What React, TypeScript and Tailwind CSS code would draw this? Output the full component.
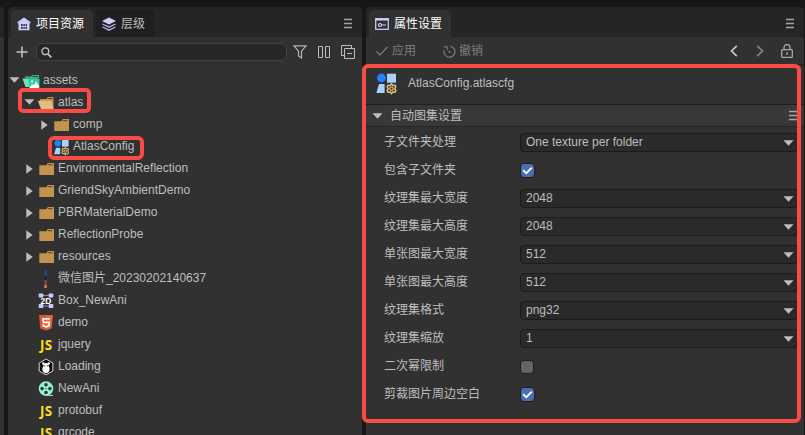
import type { ReactNode } from "react";

type IconKind =
  | "assets"
  | "folderOpen"
  | "folder"
  | "atlas"
  | "image"
  | "box2d"
  | "html"
  | "js"
  | "scene"
  | "reel";

type Node = { name: string; depth: number; icon: IconKind; arrow?: "open" | "closed" };

const tree: Node[] = [
  { name: "assets", depth: 0, icon: "assets", arrow: "open" },
  { name: "atlas", depth: 1, icon: "folderOpen", arrow: "open" },
  { name: "comp", depth: 2, icon: "folder", arrow: "closed" },
  { name: "AtlasConfig", depth: 2, icon: "atlas" },
  { name: "EnvironmentalReflection", depth: 1, icon: "folder", arrow: "closed" },
  { name: "GriendSkyAmbientDemo", depth: 1, icon: "folder", arrow: "closed" },
  { name: "PBRMaterialDemo", depth: 1, icon: "folder", arrow: "closed" },
  { name: "ReflectionProbe", depth: 1, icon: "folder", arrow: "closed" },
  { name: "resources", depth: 1, icon: "folder", arrow: "closed" },
  { name: "微信图片_20230202140637", depth: 1, icon: "image" },
  { name: "Box_NewAni", depth: 1, icon: "box2d" },
  { name: "demo", depth: 1, icon: "html" },
  { name: "jquery", depth: 1, icon: "js" },
  { name: "Loading", depth: 1, icon: "scene" },
  { name: "NewAni", depth: 1, icon: "reel" },
  { name: "protobuf", depth: 1, icon: "js" },
  { name: "qrcode", depth: 1, icon: "js" },
];

type Field = { label: string; value?: string; checked?: boolean };

const fields: Field[] = [
  { label: "子文件夹处理", value: "One texture per folder" },
  { label: "包含子文件夹", checked: true },
  { label: "纹理集最大宽度", value: "2048" },
  { label: "纹理集最大高度", value: "2048" },
  { label: "单张图最大宽度", value: "512" },
  { label: "单张图最大高度", value: "512" },
  { label: "纹理集格式", value: "png32" },
  { label: "纹理集缩放", value: "1" },
  { label: "二次幂限制", checked: false },
  { label: "剪裁图片周边空白", checked: true },
];

function AtlasShape() {
  return (
    <>
      <circle cx="5.4" cy="5" r="4.4" fill="#1f85ff" />
      <rect x="11" y="0.7" width="9" height="9" fill="#abd0fc" />
      <path d="M3 11H8.6V20H0.4Z" fill="#abd0fc" />
      <g stroke="#e3c27a" fill="none">
        <path
          d="M15.5 10.8l1.3 1.7 2.2-.3.9 1.6-1.1 1.9 1.1 1.9-.9 1.6-2.2-.2-1.3 1.7-1.3-1.7-2.2.2-.9-1.6 1.1-1.9-1.1-1.9.9-1.6 2.2.3z"
          fill="#38342c"
          strokeWidth="1.4"
        />
        <circle cx="15.5" cy="15.7" r="1.7" strokeWidth="1.2" />
      </g>
    </>
  );
}

function iconShape(kind: IconKind): ReactNode {
  switch (kind) {
    case "assets":
      return (
        <>
          <path d="M3 9V7.500H9L10.500 6H17V9Z" fill="#3fae90" />
          <path d="M10.500 7.500H16" stroke="#2b4b42" />
          <path d="M0.500 9.500H15V18H3.500Z" fill="#7cdcc0" />
          <path d="M6 9.500H17.500V19H7.500Z" fill="#2fd0a0" />
          <path d="M7.500 19L10 15L11.500 16.500L14 12.500L17 17V19Z" fill="#fff" />
          <circle cx="10" cy="12.500" r="1" fill="#fff" />
        </>
      );
    case "folderOpen":
      return (
        <>
          <path d="M3 9.500V8H9.500L11 6H16.500V18H5Z" fill="#c29450" />
          <path d="M11 7.500H15.500" stroke="#4d3e28" />
          <path d="M0.800 9.700H14.500L16.500 18H4Z" fill="#e2bc80" />
        </>
      );
    case "folder":
      return (
        <>
          <path d="M2.300 8.300H9.300L10.800 6H17V18H2.300Z" fill="#c29450" />
          <path d="M11 7.700H15.500" stroke="#4d3e28" />
        </>
      );
    case "atlas":
      return (
        <g transform="translate(1.800 4.500) scale(.74)">
          <AtlasShape />
        </g>
      );
    case "image":
      return (
        <>
          <rect x="7.300" y="3" width="2.600" height="6" fill="#1d4d72" />
          <rect x="7.300" y="9" width="2.600" height="4" fill="#202a22" />
          <rect x="7.300" y="13" width="2.600" height="5" fill="#8a4433" />
          <rect x="7.300" y="18" width="2.600" height="3" fill="#b3865c" />
        </>
      );
    case "box2d":
      return (
        <>
          <path d="M4 6.500H14V17H4Z" fill="none" stroke="#8a8aa0" />
          <rect x="3" y="8.500" width="12" height="6.500" fill="#313131" />
          <g fill="#c9caff">
            <rect x="1.700" y="4.500" width="4.600" height="4" rx=".8" />
            <rect x="11.700" y="4.500" width="4.600" height="4" rx=".8" />
            <rect x="1.700" y="15" width="4.600" height="4" rx=".8" />
            <rect x="11.700" y="15" width="4.600" height="4" rx=".8" />
          </g>
          <text x="9" y="14.700" textAnchor="middle" fontSize="8.500" fontWeight="700" fill="#fff">
            2D
          </text>
        </>
      );
    case "html":
      return (
        <>
          <path d="M2 4H16L14.700 17.500L9 19.500L3.300 17.500Z" fill="#e5532d" />
          <path d="M9 5H15L13.800 16.700L9 18.300Z" fill="#f0673a" />
          <path
            d="M12.800 7.900H6L6.400 11.300H12.200L11.800 14.900L9 15.800L6.300 14.900L6.200 13.300"
            fill="none"
            stroke="#fff"
            strokeWidth="1.800"
          />
        </>
      );
    case "js":
      return (
        <text
          x="9.300"
          y="16.800"
          textAnchor="middle"
          fontSize="13.500"
          fontWeight="700"
          letterSpacing=".4"
          fill="#f7df1e"
          className="font-['Open_Sans',sans-serif]"
        >
          JS
        </text>
      );
    case "scene":
      return (
        <>
          <path d="M9 4L15.800 8V16L9 19.800L2.200 16V8Z" fill="#050505" stroke="#d8d8d8" strokeLinejoin="round" />
          <circle cx="6.300" cy="8.600" r="1.300" fill="#fff" />
          <circle cx="11.700" cy="8.600" r="1.300" fill="#fff" />
          <path
            d="M9 8C10.600 8 11.500 9.300 11.500 11C12.600 12 13 14 12.300 15.700C11.800 17.300 10.500 18 9 18C7.500 18 6.200 17.300 5.700 15.700C5 14 5.400 12 6.500 11C6.500 9.300 7.400 8 9 8Z"
            fill="#fff"
          />
          <path d="M7.200 10.800H8.200M9.800 10.800H10.800" stroke="#222" />
        </>
      );
    case "reel":
      return (
        <>
          <circle cx="9" cy="11.600" r="7.300" fill="#93f5cd" />
          <path d="M9 18.400H16" stroke="#93f5cd" />
          <g fill="#2d3632">
            <circle cx="9" cy="7.700" r="1.800" />
            <circle cx="9" cy="15.500" r="1.800" />
            <circle cx="5.100" cy="11.600" r="1.800" />
            <circle cx="12.900" cy="11.600" r="1.800" />
            <circle cx="9" cy="11.600" r=".7" />
          </g>
        </>
      );
  }
}

function MenuIcon() {
  return (
    <svg width="8" height="11" viewBox="0 0 8 11" className="shrink-0">
      <path d="M0 1.500H8M0 5.500H8M0 9.500H8" stroke="#a4a4a4" strokeWidth="1.700" />
    </svg>
  );
}

function DownArrow() {
  return (
    <svg width="11" height="6" viewBox="0 0 11 6" className="shrink-0">
      <path d="M0.500 0.300H10.500L5.500 5.700Z" fill="#bebebe" />
    </svg>
  );
}

function TreeRow({ node }: { node: Node }) {
  return (
    <div className="flex h-[22px] shrink-0 items-center" style={{ paddingLeft: node.depth * 15 }}>
      <div className="flex w-[14px] shrink-0 items-center">
        {node.arrow === "open" && (
          <div className="pl-px">
            <DownArrow />
          </div>
        )}
        {node.arrow === "closed" && (
          <svg width="7" height="10" viewBox="0 0 7 10" className="mt-0.5 ml-[3px]">
            <path d="M0.300 0.200V9.800L6.700 5Z" fill="#bebebe" />
          </svg>
        )}
      </div>
      <svg width="18" height="22" viewBox="0 0 18 22" className="shrink-0">
        {iconShape(node.icon)}
      </svg>
      <span className="pl-[3px] leading-[22px] whitespace-nowrap">{node.name}</span>
    </div>
  );
}

function ProjectPanel() {
  return (
    <section className="flex w-[354px] shrink-0 flex-col overflow-hidden rounded-t-[5px] bg-[#313131]">
      <header className="flex h-[30px] shrink-0 items-end bg-[#252525] pl-[3px]">
        <div className="flex h-[27px] w-[82px] items-center rounded-t-[5px] bg-[#313131] pl-1.5 text-white">
          <svg width="14" height="14" viewBox="0 0 14 14" className="mr-[5px]">
            <path d="M0.700 6L7 1.500L13.300 6" fill="none" stroke="#cfcfff" strokeWidth="1.600" />
            <path d="M1.500 6.200L7 2.300L12.500 6.200V13.200H1.500Z" fill="#cfcfff" />
            <path d="M4 7H10V12H4Z" fill="#31313d" />
            <path d="M4 9.500H10M6 7V12M8.200 7V12" stroke="#cfcfff" strokeWidth=".8" />
          </svg>
          <span>项目资源</span>
        </div>
        <div className="ml-[3px] flex h-[27px] w-[58px] items-center rounded-t-[5px] bg-[#1f1f1f] pl-1.5">
          <svg width="14" height="14" viewBox="0 0 14 14" className="mr-[5px]">
            <path d="M7 0.500L14 4L7 7.500L0 4Z" fill="#cfcfff" />
            <path d="M0.500 7L7 10.200L13.500 7M0.500 10L7 13.200L13.500 10" fill="none" stroke="#b5b5df" strokeWidth="1.300" />
          </svg>
          <span>层级</span>
        </div>
        <div className="flex h-[28px] flex-1 items-center justify-end pr-[10px]">
          <MenuIcon />
        </div>
      </header>
      <div className="flex h-[32px] shrink-0 items-start pt-1.5 pl-2">
        <svg width="12" height="12" viewBox="0 0 12 12" className="mt-[3px]">
          <path d="M0.500 6H11.500M6 0.500V11.500" stroke="#c4c4c4" strokeWidth="1.500" />
        </svg>
        <div className="ml-2 flex h-[18px] w-[251px] items-center rounded-[6px] border border-[#424242] bg-[#272727] pl-1">
          <svg width="11" height="11" viewBox="0 0 11 11" className="mt-px">
            <circle cx="4.300" cy="4.300" r="3.400" fill="none" stroke="#c4c4c4" strokeWidth="1.300" />
            <path d="M6.800 6.800L10.300 10.300" stroke="#c4c4c4" strokeWidth="1.700" />
          </svg>
        </div>
        <svg width="14" height="14" viewBox="0 0 14 14" className="mt-[2px] ml-1.5" fill="none" stroke="#b4b4b4">
          <path d="M1 0.800H13L8.500 6.200V13L5.500 11V6.200Z" strokeWidth="1.200" />
        </svg>
        <svg width="12" height="12" viewBox="0 0 12 12" className="mt-[3px] ml-[11px]" fill="none" stroke="#bcbcbc">
          <path d="M0.500 0.500H4.500V11.500H0.500ZM7.500 0.500H11.500V11.500H7.500Z" />
        </svg>
        <svg width="14" height="14" viewBox="0 0 14 14" className="mt-[2px] ml-[11px]" fill="none" stroke="#bcbcbc">
          <path d="M3.500 10.500H0.500V0.500H10.500V3.500M3.500 3.500H13.500V13.500H3.500ZM6 8.500H11" />
        </svg>
      </div>
      <div className="flex min-h-0 flex-1 flex-col overflow-hidden">
        {tree.map((node) => (
          <TreeRow key={node.name} node={node} />
        ))}
      </div>
    </section>
  );
}

function FieldRow({ field }: { field: Field }) {
  return (
    <div className="flex h-[28px] items-center">
      <span className="w-[136px] shrink-0">{field.label}</span>
      {field.value !== undefined ? (
        <div className="flex h-[19px] flex-1 items-center justify-between rounded-[4px] border border-[#1b1b1b] bg-[#2a2a2a] pr-[3px] pl-[5px]">
          <span className="leading-[17px]">{field.value}</span>
          <div className="pt-px">
            <DownArrow />
          </div>
        </div>
      ) : field.checked ? (
        <div className="mt-px flex size-[15px] items-center justify-center rounded-[4px] border border-[#1d1d1d] bg-[#4c6db3]">
          <svg width="11" height="9" viewBox="0 0 11 9">
            <path d="M1.200 4.300L4.300 7.200L9.800 1.700" fill="none" stroke="#fff" strokeWidth="1.900" />
          </svg>
        </div>
      ) : (
        <div className="mt-0.5 size-[14px] rounded-[4px] border border-[#1d1d1d] bg-[#646464]" />
      )}
    </div>
  );
}

function PropertyPanel() {
  return (
    <section className="flex w-[438px] shrink-0 flex-col overflow-hidden rounded-t-[5px] bg-[#313131]">
      <header className="flex h-[30px] shrink-0 items-end bg-[#252525] pl-[3px]">
        <div className="flex h-[27px] w-[82px] items-center rounded-t-[5px] bg-[#313131] pl-1.5 text-white">
          <svg width="14" height="12" viewBox="0 0 14 12" className="mr-[5px]">
            <rect x="0.700" y="0.700" width="12.600" height="10.600" fill="none" stroke="#cfcfff" strokeWidth="1.200" />
            <path d="M0.500 1.500H13.500" stroke="#cfcfff" strokeWidth="2" />
            <circle cx="5" cy="7" r="1.500" fill="none" stroke="#cfcfff" strokeWidth="1.200" />
            <path d="M6.500 7H11" stroke="#cfcfff" strokeWidth="1.200" />
          </svg>
          <span>属性设置</span>
        </div>
        <div className="flex h-[28px] flex-1 items-center justify-end pr-[10px]">
          <MenuIcon />
        </div>
      </header>
      <div className="flex h-[28px] shrink-0 items-center border-b border-[#1f1f1f] pt-px pl-[10px] text-[#7e7e7e]">
        <svg width="12" height="10" viewBox="0 0 12 10" fill="none" stroke="#777" className="mr-1">
          <path d="M0.500 5.500L4 9L11.500 0.800" strokeWidth="1.300" />
        </svg>
        <span>应用</span>
        <svg width="13" height="14" viewBox="0 0 13 14" fill="none" stroke="#777" className="mt-px mr-[3px] ml-[27px]">
          <path d="M7.500 1.300A5.500 5.500 0 1 1 1.200 5.200" strokeWidth="1.300" />
          <path d="M0.500 1.800H4.200V5.300" strokeWidth="1.200" />
          <circle cx="6.500" cy="6.800" r="1.100" fill="#777" stroke="none" />
        </svg>
        <span>撤销</span>
        <div className="flex flex-1 items-center justify-end pr-[11px]">
          <svg width="8" height="12" viewBox="0 0 8 12" fill="none" stroke="#c8c8c8" strokeWidth="1.700">
            <path d="M6.800 0.800L1.500 6L6.800 11.200" />
          </svg>
          <svg width="8" height="12" viewBox="0 0 8 12" fill="none" stroke="#848484" strokeWidth="1.700" className="ml-[18px]">
            <path d="M1.200 0.800L6.500 6L1.200 11.200" />
          </svg>
          <svg width="12" height="14" viewBox="0 0 12 14" fill="none" stroke="#a8a8a8" strokeWidth="1.300" className="ml-[17px]">
            <rect x="0.700" y="5.600" width="10.600" height="7.800" rx="1" />
            <path d="M3 5.500V3.500A3 3 0 0 1 9 3.500V5.500M6 8V11" />
          </svg>
        </div>
      </div>
      <div className="flex h-[40px] shrink-0 items-center border-b border-[#1f1f1f] pl-[10px]">
        <svg width="22" height="22" viewBox="0 0 22 22" className="mr-[10px] mb-px">
          <AtlasShape />
        </svg>
        <span className="pb-1">AtlasConfig.atlascfg</span>
      </div>
      <div className="flex h-[22px] shrink-0 items-center border-b border-[#262626] bg-[#383838] pr-[7px] pl-[6px]">
        <DownArrow />
        <span className="ml-[7px] flex-1">自动图集设置</span>
        <MenuIcon />
      </div>
      <div className="flex flex-col pt-px pr-[6px] pl-[18px]">
        {fields.map((field) => (
          <FieldRow key={field.label} field={field} />
        ))}
      </div>
    </section>
  );
}

export default function App() {
  return (
    <main className="relative flex h-[435px] w-[805px] overflow-hidden bg-[#171717] pt-[7px] font-['Liberation_Sans','Noto_Sans_CJK_SC',sans-serif] text-[12px] leading-[18px] text-[#bebebe]">
      <div className="mr-1 w-1 shrink-0 rounded-tr-[4px] bg-[#313131]">
        <div className="h-[30px] rounded-tr-[4px] bg-[#252525]" />
      </div>
      <ProjectPanel />
      <div className="w-1 shrink-0" />
      <PropertyPanel />
      <div className="absolute top-[88px] left-[18px] h-[25px] w-[73px] rounded-[5px] border-4 border-[#fa4b46]" />
      <div className="absolute top-[136px] left-[48px] h-[24px] w-[96px] rounded-[6px] border-4 border-[#fa4b46]" />
      <div className="absolute top-[64px] left-[362px] h-[359px] w-[439px] rounded-[6px] border-4 border-[#fa4b46]" />
    </main>
  );
}
